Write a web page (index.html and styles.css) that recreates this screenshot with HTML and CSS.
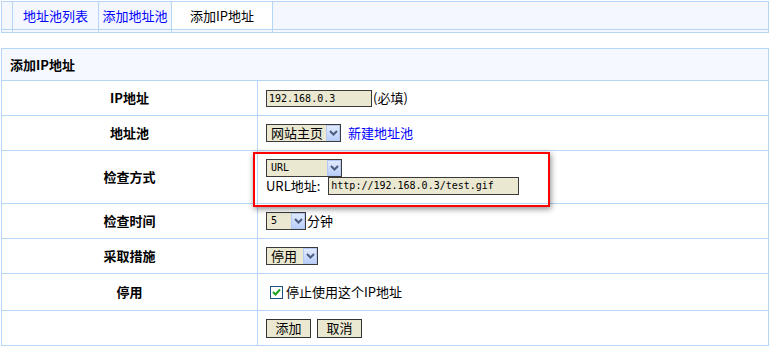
FILE: index.html
```html
<!DOCTYPE html>
<html>
	<head>
		<meta charset="UTF-8">
		<title>添加IP地址</title>
		<link rel="stylesheet" href="styles.css">
	</head>
	<body>
		<div class="page">
			<div class="nav">
				<div class="tab tab-blank"><div class="tab-in"></div></div>
				<div class="tab tab-list"><div class="tab-in"><a href="#">地址池列表</a></div></div>
				<div class="tab tab-add"><div class="tab-in"><a href="#">添加地址池</a></div></div>
				<div class="tab tab-ip"><div class="tab-in tab-on">添加IP地址</div></div>
				<div class="tab tab-rest"><div class="tab-in"></div></div>
			</div>

			<div class="form">
				<div class="form-head">添加IP地址</div>

				<div class="label">IP地址</div>
				<div class="field">
					<span class="input input-ip">192.168.0.3</span>(必填)
				</div>

				<div class="label">地址池</div>
				<div class="field">
					<span class="sel sel-pool"><span class="sel-text">网站主页</span><span class="sel-btn"><svg width="9" height="6" viewBox="0 0 9 6"><path d="M1 1 L4.5 4.5 L8 1" fill="none" stroke="#4a5d80" stroke-width="2"/></svg></span></span>
					<a href="#" class="link">新建地址池</a>
				</div>

				<div class="label">检查方式</div>
				<div class="field field-stack">
					<span class="sel sel-url"><span class="sel-text mono">URL</span><span class="sel-btn"><svg width="9" height="6" viewBox="0 0 9 6"><path d="M1 1 L4.5 4.5 L8 1" fill="none" stroke="#4a5d80" stroke-width="2"/></svg></span></span>
					<div class="line">URL地址:<span class="input input-url">http://192.168.0.3/test.gif</span></div>
				</div>

				<div class="label">检查时间</div>
				<div class="field">
					<span class="sel sel-time"><span class="sel-text mono">5</span><span class="sel-btn"><svg width="9" height="6" viewBox="0 0 9 6"><path d="M1 1 L4.5 4.5 L8 1" fill="none" stroke="#4a5d80" stroke-width="2"/></svg></span></span>分钟
				</div>

				<div class="label">采取措施</div>
				<div class="field">
					<span class="sel sel-act"><span class="sel-text">停用</span><span class="sel-btn"><svg width="9" height="6" viewBox="0 0 9 6"><path d="M1 1 L4.5 4.5 L8 1" fill="none" stroke="#4a5d80" stroke-width="2"/></svg></span></span>
				</div>

				<div class="label">停用</div>
				<div class="field">
					<span class="check"><svg width="11" height="11" viewBox="0 0 11 11"><path d="M2 5 L4.5 7.5 L9 2.5" fill="none" stroke="#1fa31f" stroke-width="2"/></svg></span>停止使用这个IP地址
				</div>

				<div class="label"></div>
				<div class="field">
					<button class="btn">添加</button>
					<button class="btn">取消</button>
				</div>

				<!-- 截图标注框 -->
				<div class="mark"></div>
			</div>
		</div>
	</body>
</html>
```

FILE: styles.css
```css
*{
	margin:0;
	padding:0;
}
body{
	font-family:"Noto Sans CJK SC", "Liberation Sans", sans-serif;
	font-size:13px;
	line-height:16px;
	color:#000;
	background:#fff;
}
a{
	color:#0000ff;
	text-decoration:none;
}
.mono{
	font-family:"DejaVu Sans Mono", "Liberation Mono", monospace;
	font-size:10px;
}
div.page{
	padding:1px;
}

/* 顶部标签 */
div.nav{
	display:flex;
	border:1px solid #b5d6f7;
	margin-bottom:15px;
}
div.nav .tab{
	border-right:1px solid #b5d6f7;
	padding-bottom:2px;
	background:#f4f8fe;
}
div.nav .tab-in{
	height:27px;
	border-bottom:1px solid #b5d6f7;
	display:flex;
	align-items:center;
	justify-content:center;
}
div.nav .tab-on{
	background:#fff;
}
div.nav .tab-blank{ width:10px; }
div.nav .tab-list{ width:85px; }
div.nav .tab-add{ width:72px; }
div.nav .tab-ip{ width:100px; }
div.nav .tab-rest{
	flex:1;
	border-right:none;
}

/* 表单 */
div.form{
	position:relative;
	display:grid;
	grid-template-columns:255px 1fr;
	grid-template-rows:31px 34px 34px 52px 34px 34px 36px 34px;
	gap:1px;
	border:1px solid #b5d6f7;
	background:#b5d6f7;
}
div.form .form-head{
	grid-column:1 / 3;
	background:#f5f9ff;
	font-weight:bold;
	padding-left:8px;
	display:flex;
	align-items:center;
}
div.form .label{
	background:#fff;
	font-weight:bold;
	display:flex;
	align-items:center;
	justify-content:center;
}
div.form .field{
	background:#fff;
	padding-left:8px;
	display:flex;
	align-items:center;
}
div.form .field-stack{
	flex-direction:column;
	align-items:flex-start;
	justify-content:center;
}
div.form .line{
	display:flex;
	align-items:center;
}

.input{
	display:inline-block;
	box-sizing:border-box;
	height:17px;
	line-height:15px;
	border:1px solid #3a3a3a;
	background:#ebe8d2;
	padding-left:2px;
	font-family:"DejaVu Sans Mono", "Liberation Mono", monospace;
	font-size:10px;
}
.input-ip{
	width:106px;
	margin-right:1px;
}
.input-url{
	width:191px;
	height:18px;
	line-height:16px;
	margin-left:8px;
}

.sel{
	display:inline-flex;
	box-sizing:border-box;
	height:18px;
	border:1px solid #3a3a3a;
	background:#ebe8d2;
}
.sel-text{
	flex:1;
	padding-left:4px;
	line-height:16px;
}
.sel-btn{
	box-sizing:border-box;
	width:14px;
	border:1px solid #b6c9f2;
	background:linear-gradient(#e1eafe, #bacef9);
	display:flex;
	align-items:center;
	justify-content:center;
}
.sel-pool{ width:75px; }
.sel-url{ width:76px; }
.sel-time{ width:40px; margin-right:1px; }
.sel-act{ width:52px; }

a.link{
	margin-left:7px;
}

.check{
	box-sizing:border-box;
	width:13px;
	height:13px;
	margin-left:4px;
	margin-right:3px;
	border:1px solid #1c5180;
	background:#fff;
	display:flex;
	align-items:center;
	justify-content:center;
}

.btn{
	box-sizing:border-box;
	width:45px;
	height:19px;
	border:1px solid #333;
	background:#ebe8d2;
	font-family:"Noto Sans CJK SC", sans-serif;
	font-size:13px;
	line-height:16px;
	margin-right:6px;
}

div.mark{
	position:absolute;
	left:251px;
	top:103px;
	width:297px;
	height:55px;
	box-sizing:border-box;
	border:2px solid #ff0000;
	box-shadow:1px 2px 6px rgba(0,0,0,0.45);
}
```
